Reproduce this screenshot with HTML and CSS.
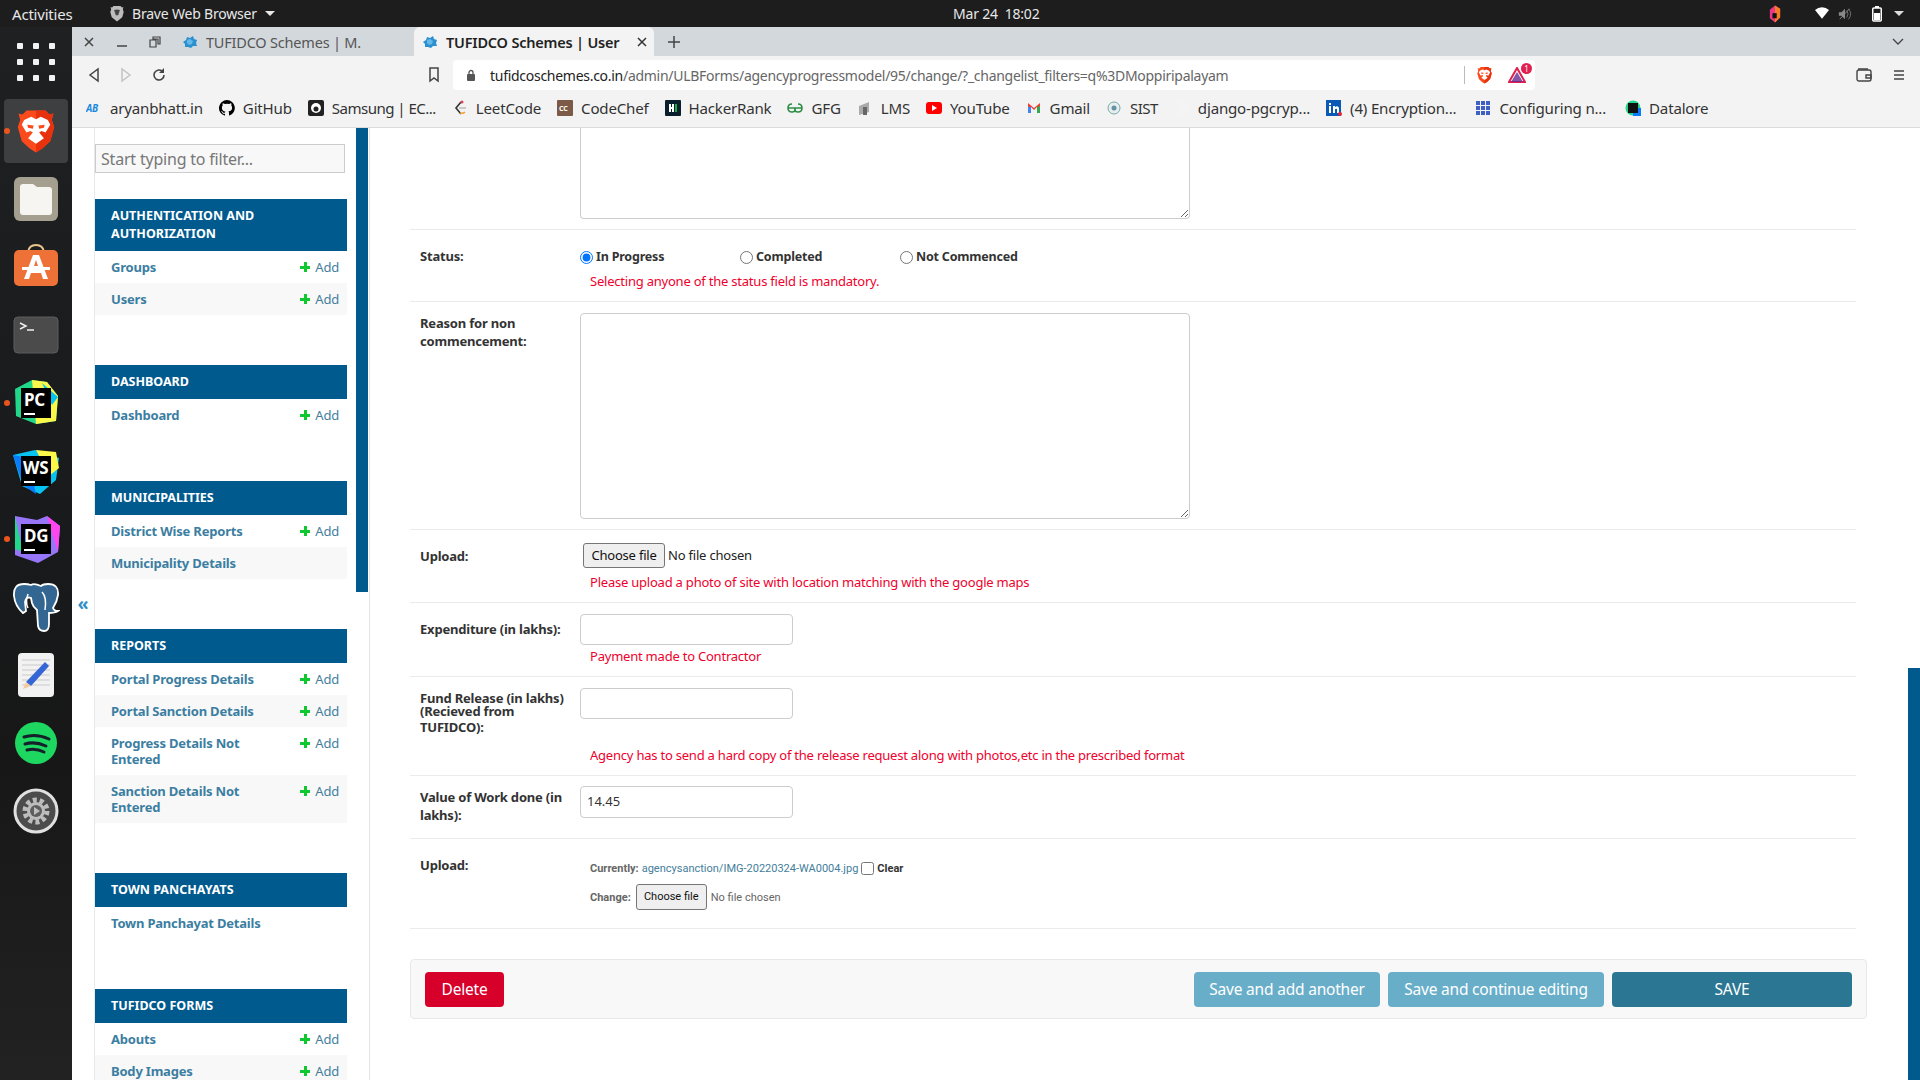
FILE: index.html
```html
<!DOCTYPE html>
<html lang="en">
<head>
  <meta charset="UTF-8">
  <title>TUFIDCO Schemes | User</title>
  <link rel="stylesheet" href="styles.css">
</head>
<body>
  <svg class="defs" width="0" height="0">
    <symbol id="fav" viewBox="0 0 16 16">
      <path d="M1 8l3-2 1-3 3 1 3-2 1 3 3 1-1 3 1 3-4 0-2 2-3-1-3 0 0-3z" fill="#2b8fd0"/>
      <path d="M5 6l3-1 3 2-1 3-3 1-2-2z" fill="#63b8e8"/>
    </symbol>
    <symbol id="lion" viewBox="0 0 48 56">
      <path d="M12 2h24l5 5 5-1-2 8 3 9-5 18-10 9-8 5-8-5-10-9-5-18 3-9-2-8 5 1z" fill="#fb4a1c"/>
      <path d="M24 2h12l5 5 5-1-2 8 3 9-5 18-10 9-8 5z" fill="#e8320e"/>
      <path d="M9 14l9-4 6 3 6-3 9 4 3 6-6 10-5-2-3 2 6 7-10 7-10-7 6-7-3-2-5 2-6-10z" fill="#fff"/>
      <path d="M13 20l8 1-1 4-6-1zM35 20l-8 1 1 4 6-1z" fill="#fb4a1c"/>
    </symbol>
    <symbol id="octo" viewBox="0 0 16 16">
      <path d="M8 0a8 8 0 0 0-2.500 15.600c.4.100.5-.2.5-.4v-1.400c-2.200.5-2.700-1-2.700-1-.4-.9-.9-1.200-.9-1.200-.7-.5.100-.5.100-.5.800.100 1.200.800 1.200.800.700 1.200 1.900.900 2.300.700.100-.5.300-.9.500-1.100-1.800-.2-3.600-.9-3.600-4 0-.9.300-1.600.800-2.100-.1-.2-.4-1 .1-2.100 0 0 .7-.2 2.200.800a7.600 7.600 0 0 1 4 0c1.500-1 2.200-.8 2.200-.8.400 1.100.2 1.900.1 2.100.5.600.8 1.300.8 2.100 0 3.100-1.900 3.700-3.700 3.900.3.300.6.800.6 1.500v2.200c0 .2.100.5.600.4A8 8 0 0 0 8 0z"/>
    </symbol>
  </svg>

  <div class="topbar">
    <span class="activities">Activities</span>
    <span class="app-menu">
      <svg class="app-shield" viewBox="0 0 48 56"><path d="M12 2h24l5 5 5-1-2 8 3 9-5 18-18 14-18-14-5-18 3-9-2-8 5 1z" fill="#bdbdbd"/><path d="M14 16l10-2 10 2-4 12-2 6h-8l-2-6z" fill="#444"/></svg>
      Brave Web Browser
      <i class="caret"></i>
    </span>
    <span class="clock">Mar 24&nbsp; 18:02</span>
    <span class="tray">
      <svg class="tray-app" viewBox="0 0 14 20"><path d="M7 0l6 4v10l-6 6-6-5V5z" fill="#e8388a"/><path d="M7 0l6 4v10l-6 6z" fill="#f57c20"/><path d="M4 9h5v6H4z" fill="#111"/></svg>
      <svg class="tray-wifi" viewBox="0 0 16 14"><path d="M0 3a12 12 0 0 1 16 0l-8 10z" fill="#fff"/></svg>
      <svg class="tray-vol" viewBox="0 0 16 14"><path d="M1 5h3l4-4v12l-4-4H1z" fill="#8a8a8a"/><path d="M10 3q3 4 0 8M12 1q5 6 0 12" stroke="#777" fill="none"/><path d="M2 13L13 1" stroke="#8a8a8a"/></svg>
      <svg class="tray-batt" viewBox="0 0 10 16"><path d="M3 0h4v2H3z" fill="#fff"/><rect x=".75" y="2" width="8.500" height="13" rx="1" fill="none" stroke="#fff" stroke-width="1.500"/><rect x="2" y="7" width="6" height="7" fill="#fff"/></svg>
      <i class="caret caret-tray"></i>
    </span>
  </div>

  <div class="desktop">
    <nav class="dock">
      <div class="dock-item dock-grid">
        <div class="dots"><i></i><i></i><i></i><i></i><i></i><i></i><i></i><i></i><i></i></div>
      </div>
      <div class="dock-item dock-active running">
        <svg width="38" height="48"><use href="#lion"/></svg>
      </div>
      <div class="dock-item">
        <svg width="46" height="46" viewBox="0 0 46 46"><rect x="1" y="1" width="44" height="44" rx="6" fill="#a59f8f"/><path d="M7 11q0-3 3-3h10l4 3h12q3 0 3 3v22q0 3-3 3H10q-3 0-3-3z" fill="#f7f5f2"/></svg>
      </div>
      <div class="dock-item">
        <svg width="46" height="50" viewBox="0 0 46 50"><path d="M15 10q1-7 8-7t8 7" fill="none" stroke="#edc58f" stroke-width="2"/><rect x="1" y="8" width="44" height="36" rx="5" fill="#ee7138"/><path d="M20 13h6l9 24h-5l-2-6H18l-2 6h-5zM21 24h4l-2-6z" fill="#fff"/><path d="M9 25h28v3H9z" fill="#fff"/></svg>
      </div>
      <div class="dock-item">
        <svg width="46" height="38" viewBox="0 0 46 38"><rect x="1" y="1" width="44" height="36" rx="4" fill="#4b4b4b" stroke="#5c5c5c"/><path d="M7 7l6 3-6 3" fill="none" stroke="#eee" stroke-width="1.500"/><path d="M14 14h7" stroke="#eee" stroke-width="1.500"/></svg>
      </div>
      <div class="dock-item running">
        <svg width="48" height="48" viewBox="0 0 48 48"><path d="M3 10L20 1l15 2 11 14-2 25-20 3-20-8z" fill="#21d789"/><path d="M20 1l15 2 11 14-2 25-20 3z" fill="#fcf84a"/><path d="M30 4l16 14-6 8z" fill="#07c3f2"/><rect x="9" y="9" width="30" height="30" fill="#000"/><text x="12" y="27" class="jb-text">PC</text><path d="M12 34h11v2H12z" fill="#fff"/></svg>
      </div>
      <div class="dock-item">
        <svg width="48" height="48" viewBox="0 0 48 48"><path d="M1 8l22-5 24 8-3 22-16 14-18-8z" fill="#07c3f2"/><path d="M24 3l20 2 3 16-10 8z" fill="#fcf84a"/><path d="M1 8l10 30 13 9-8-36z" fill="#087cfa"/><rect x="9" y="9" width="30" height="30" fill="#000"/><text x="11" y="27" class="jb-text">WS</text><path d="M12 34h11v2H12z" fill="#fff"/></svg>
      </div>
      <div class="dock-item running">
        <svg width="48" height="50" viewBox="0 0 48 50"><path d="M3 2l22 4 10-4 13 10-2 26-20 11-23-8z" fill="#9775f8"/><path d="M3 2l8 36-8-3z" fill="#21d789"/><path d="M35 2l13 10-2 26z" fill="#ff45ed"/><rect x="9" y="10" width="30" height="30" fill="#000"/><text x="12" y="28" class="jb-text">DG</text><path d="M12 35h11v2H12z" fill="#fff"/></svg>
      </div>
      <div class="dock-item">
        <svg width="48" height="50" viewBox="0 0 48 50"><path d="M12 2q-11 0-10 12 1 10 9 17l3-2-1-9q1-6 6-4l1 5q1 4 5 7l1 16q1 5 6 5t5-7V31q6 0 9-2-4 0-5-3 4-6 5-13Q47 2 36 2q-5 0-7 2-7-3-10-1-3-1-7-1z" fill="#336791" stroke="#fff" stroke-width="1.800"/><path d="M16 12q-3 8 0 14M30 10q5 5 3 18" fill="none" stroke="#fff" stroke-width="1.500"/></svg>
      </div>
      <div class="dock-item">
        <svg width="38" height="46" viewBox="0 0 38 46"><rect x="1" y="1" width="36" height="44" rx="4" fill="#f2f2f2"/><path d="M5 8h28M5 13h28M5 18h28M5 23h28M5 28h28M5 33h28" stroke="#c9c9c9"/><path d="M28 10l4 4-18 20-5-4z" fill="#3566d6"/><path d="M9 30l5 4-8 3z" fill="#f2c9a0"/></svg>
      </div>
      <div class="dock-item">
        <svg width="42" height="42" viewBox="0 0 42 42"><circle cx="21" cy="21" r="21" fill="#1ed760"/><path d="M9 15q12-4 25 2M10 22q10-3 21 2M12 28q9-2 17 2" fill="none" stroke="#14212a" stroke-width="3" stroke-linecap="round"/></svg>
      </div>
      <div class="dock-item">
        <svg width="46" height="46" viewBox="0 0 46 46"><circle cx="23" cy="23" r="21" fill="#4c4c4c" stroke="#e0e0e0" stroke-width="3"/><circle cx="23" cy="23" r="11" fill="none" stroke="#bdbdbd" stroke-width="5" stroke-dasharray="4 2.900"/><circle cx="23" cy="23" r="9" fill="#bdbdbd"/><circle cx="23" cy="23" r="6" fill="#5e5e5e"/><path d="M21 19l6 4-6 4z" fill="#bdbdbd"/></svg>
      </div>
    </nav>

    <div class="browser">
      <div class="tabstrip">
        <div class="win-btns">
          <svg width="12" height="12" viewBox="0 0 12 12"><path d="M2 2l8 8M10 2l-8 8" stroke="#444" stroke-width="1.500"/></svg>
          <svg width="12" height="12" viewBox="0 0 12 12"><path d="M1 10h10" stroke="#444" stroke-width="1.500"/></svg>
          <svg width="12" height="12" viewBox="0 0 12 12"><path d="M4 1h7v7H9V3H4zM1 4h6v7H1z" fill="none" stroke="#444" stroke-width="1.200"/></svg>
        </div>
        <div class="tab">
          <svg class="favicon"><use href="#fav"/></svg>
          <span class="tab-title">TUFIDCO Schemes | M.</span>
        </div>
        <div class="tab tab-active">
          <svg class="favicon"><use href="#fav"/></svg>
          <span class="tab-title">TUFIDCO Schemes | User</span>
          <svg class="tab-close" width="10" height="10" viewBox="0 0 10 10"><path d="M1 1l8 8M9 1L1 9" stroke="#333" stroke-width="1.500"/></svg>
        </div>
        <svg class="tab-new" width="14" height="14" viewBox="0 0 14 14"><path d="M7 1v12M1 7h12" stroke="#444" stroke-width="1.500"/></svg>
        <svg class="tab-list" width="12" height="8" viewBox="0 0 12 8"><path d="M1 1l5 5 5-5" fill="none" stroke="#444" stroke-width="1.300"/></svg>
      </div>

      <div class="toolbar">
        <svg class="nav-ico" width="14" height="16" viewBox="0 0 14 16"><path d="M11 2v12L3 8z" fill="none" stroke="#444" stroke-width="1.500"/></svg>
        <svg class="nav-ico" width="14" height="16" viewBox="0 0 14 16"><path d="M3 2v12l8-6z" fill="none" stroke="#c4c4c4" stroke-width="1.500"/></svg>
        <svg class="nav-ico" width="16" height="16" viewBox="0 0 16 16"><path d="M13 8a5 5 0 1 1-2-4" fill="none" stroke="#444" stroke-width="1.600"/><path d="M13 1v5H8z" fill="#444"/></svg>
        <svg class="bookmark-ico" width="12" height="16" viewBox="0 0 12 16"><path d="M2 1h8v13l-4-3-4 3z" fill="none" stroke="#444" stroke-width="1.500"/></svg>
        <div class="urlbar">
          <svg class="lock" width="10" height="12" viewBox="0 0 10 12"><rect x="1" y="5" width="8" height="7" rx="1" fill="#555"/><path d="M3 5V3.500a2 2 0 0 1 4 0V5" fill="none" stroke="#555" stroke-width="1.300"/></svg>
          <span class="url"><b>tufidcoschemes.co.in</b>/admin/ULBForms/agencyprogressmodel/95/change/?_changelist_filters=q%3DMoppiripalayam</span>
          <span class="url-sep"></span>
          <svg class="shield" width="15" height="18"><use href="#lion"/></svg>
          <span class="rewards">
            <svg width="18" height="16" viewBox="0 0 18 16"><path d="M9 1l8 14H1z" fill="#fff" stroke="#e0204f" stroke-width="2"/><path d="M3 15h12L9 5z" fill="#662d91" opacity=".8"/></svg>
            <i class="rewards-badge">1</i>
          </span>
        </div>
        <svg class="wallet" width="16" height="14" viewBox="0 0 16 14"><rect x="1" y="2" width="14" height="11" rx="2" fill="none" stroke="#444" stroke-width="1.400"/><path d="M2 1h10M10 7h5v3h-5z" fill="none" stroke="#444" stroke-width="1.400"/></svg>
        <svg class="menu-ico" width="12" height="12" viewBox="0 0 12 12"><path d="M1 2h10M1 6h10M1 10h10" stroke="#444" stroke-width="1.600"/></svg>
      </div>

      <div class="bookmarks">
        <a class="bm"><svg class="bm-ico" viewBox="0 0 16 16"><text x="0" y="12" class="ab-text">AB</text></svg>aryanbhatt.in</a>
        <a class="bm"><svg class="bm-ico"><use href="#octo"/></svg>GitHub</a>
        <a class="bm bm-tight"><svg class="bm-ico" viewBox="0 0 16 16"><rect width="16" height="16" rx="2" fill="#222"/><circle cx="8" cy="8" r="5" fill="#fff"/><circle cx="8" cy="9" r="2.500" fill="#222"/></svg>Samsung | EC...</a>
        <a class="bm"><svg class="bm-ico" viewBox="0 0 16 16"><path d="M9 2L4 8l5 6" fill="none" stroke="#333" stroke-width="1.600"/><path d="M7 8h7" stroke="#bbb" stroke-width="1.500"/><path d="M8 13q3 1 5-1" fill="none" stroke="#f0a030" stroke-width="1.500"/><circle cx="10" cy="2" r="1.500" fill="#e0405a"/></svg>LeetCode</a>
        <a class="bm"><svg class="bm-ico" viewBox="0 0 16 16"><rect width="16" height="16" rx="1" fill="#7d5a45"/><text x="2" y="11" class="cc-text">CC</text></svg>CodeChef</a>
        <a class="bm"><svg class="bm-ico" viewBox="0 0 16 16"><rect width="16" height="16" rx="1" fill="#0b1e2b"/><path d="M4 4h2v3h1V4h2v8H7V9H6v3H4z" fill="#fff"/><path d="M10 4h2v8h-2z" fill="#1ba94c"/></svg>HackerRank</a>
        <a class="bm"><svg class="bm-ico" viewBox="0 0 16 16"><path d="M1 8h14M5 4Q1 4 1 8t4 4 3-4M11 4q4 0 4 4t-4 4-3-4" fill="none" stroke="#2f8d46" stroke-width="1.600"/></svg>GFG</a>
        <a class="bm"><svg class="bm-ico" viewBox="0 0 16 16"><path d="M2 6l10-4v10l-10 3z" fill="#aaa"/><path d="M6 7h4v8H6z" fill="#666"/></svg>LMS</a>
        <a class="bm"><svg class="bm-ico" viewBox="0 0 16 16"><rect y="2" width="16" height="12" rx="3" fill="#f00"/><path d="M6 5l5 3-5 3z" fill="#fff"/></svg>YouTube</a>
        <a class="bm"><svg class="bm-ico" viewBox="0 0 16 16"><path d="M2 3v10h3V7l3 3 3-3v6h3V3l-6 5z" fill="#ea4335"/><path d="M2 7v6h3V7z" fill="#4285f4"/><path d="M11 7v6h3V6z" fill="#34a853"/></svg>Gmail</a>
        <a class="bm bm-tight"><svg class="bm-ico" viewBox="0 0 16 16"><circle cx="8" cy="8" r="6" fill="#e6eef0" stroke="#7aa" stroke-width="1"/><circle cx="8" cy="8" r="2.500" fill="#6a8fa0"/></svg>SIST</a>
        <a class="bm"><svg class="bm-ico" viewBox="0 0 16 16"><path d="M3 1h7l3 3v11H3z" fill="#f4f4f4"/></svg>django-pgcryp...</a>
        <a class="bm"><svg class="bm-ico" viewBox="0 0 16 16"><rect width="15" height="16" fill="#0a59b4"/><path d="M3 6h2v7H3zM3 3h2v2H3zM7 6h2v1q3-2 4 1v5h-2V9q-2-1-2 1v3H7z" fill="#fff"/><circle cx="14" cy="14" r="2" fill="#e0263c"/></svg>(4) Encryption...</a>
        <a class="bm bm-push"><svg class="bm-ico" viewBox="0 0 16 16"><path d="M1 1h4v4H1zM6 1h4v4H6zM11 1h4v4h-4zM1 6h4v4H1zM6 6h4v4H6zM11 6h4v4h-4zM1 11h4v4H1zM6 11h4v4H6zM11 11h4v4h-4z" fill="#3f5fc4"/></svg>Configuring n...</a>
        <a class="bm bm-push"><svg class="bm-ico" viewBox="0 0 16 16"><circle cx="8" cy="8" r="7.500" fill="#21d789"/><path d="M8 8h8v8H8z" fill="#087cfa"/><rect x="3" y="3" width="10" height="10" fill="#111"/></svg>Datalore</a>
      </div>

      <div class="page">
        <aside class="sidebar">
          <div class="side-nav">
            <input class="nav-filter" type="text" placeholder="Start typing to filter...">

            <div class="module">
              <h3>Authentication and Authorization</h3>
              <div class="mod-row"><a class="mod-name">Groups</a><a class="add"><span class="plus"></span>Add</a></div>
              <div class="mod-row"><a class="mod-name">Users</a><a class="add"><span class="plus"></span>Add</a></div>
            </div>
            <div class="module">
              <h3>Dashboard</h3>
              <div class="mod-row"><a class="mod-name">Dashboard</a><a class="add"><span class="plus"></span>Add</a></div>
            </div>
            <div class="module">
              <h3>Municipalities</h3>
              <div class="mod-row"><a class="mod-name">District Wise Reports</a><a class="add"><span class="plus"></span>Add</a></div>
              <div class="mod-row"><a class="mod-name">Municipality Details</a></div>
            </div>
            <div class="module">
              <h3>Reports</h3>
              <div class="mod-row"><a class="mod-name">Portal Progress Details</a><a class="add"><span class="plus"></span>Add</a></div>
              <div class="mod-row"><a class="mod-name">Portal Sanction Details</a><a class="add"><span class="plus"></span>Add</a></div>
              <div class="mod-row"><a class="mod-name">Progress Details Not Entered</a><a class="add"><span class="plus"></span>Add</a></div>
              <div class="mod-row"><a class="mod-name">Sanction Details Not Entered</a><a class="add"><span class="plus"></span>Add</a></div>
            </div>
            <div class="module">
              <h3>Town Panchayats</h3>
              <div class="mod-row"><a class="mod-name">Town Panchayat Details</a></div>
            </div>
            <div class="module">
              <h3>TUFIDCO Forms</h3>
              <div class="mod-row"><a class="mod-name">Abouts</a><a class="add"><span class="plus"></span>Add</a></div>
              <div class="mod-row"><a class="mod-name">Body Images</a><a class="add"><span class="plus"></span>Add</a></div>
            </div>
          </div>
          <div class="side-scroll"><div class="side-thumb"></div></div>
          <button class="nav-toggle">«</button>
        </aside>

        <main class="content">
          <div class="form-row row-top">
            <div class="form-label"></div>
            <div class="form-field"><textarea class="text-area area-cut"></textarea></div>
          </div>

          <div class="form-row">
            <label class="form-label">Status:</label>
            <div class="form-field">
              <div class="radio-list">
                <label class="radio-item"><input type="radio" name="status" checked>In Progress</label>
                <label class="radio-item"><input type="radio" name="status">Completed</label>
                <label class="radio-item"><input type="radio" name="status">Not Commenced</label>
              </div>
              <p class="help help-status">Selecting anyone of the status field is mandatory.</p>
            </div>
          </div>

          <div class="form-row row-reason">
            <label class="form-label label-tight">Reason for non commencement:</label>
            <div class="form-field"><textarea class="text-area area-full"></textarea></div>
          </div>

          <div class="form-row">
            <label class="form-label">Upload:</label>
            <div class="form-field">
              <div class="file-line"><span class="file-btn">Choose file</span><span class="file-none">No file chosen</span></div>
              <p class="help help-file">Please upload a photo of site with location matching with the google maps</p>
            </div>
          </div>

          <div class="form-row">
            <label class="form-label">Expenditure (in lakhs):</label>
            <div class="form-field">
              <input class="text-input" type="text">
              <p class="help">Payment made to Contractor</p>
            </div>
          </div>

          <div class="form-row">
            <label class="form-label label-fund"><span class="fund-top">Fund Release (in lakhs) (Recieved from</span>TUFIDCO):</label>
            <div class="form-field">
              <input class="text-input" type="text">
              <p class="help help-fund">Agency has to send a hard copy of the release request along with photos,etc in the prescribed format</p>
            </div>
          </div>

          <div class="form-row row-value">
            <label class="form-label label-value">Value of Work done (in lakhs):</label>
            <div class="form-field"><input class="text-input" type="text" value="14.45"></div>
          </div>

          <div class="form-row row-current">
            <label class="form-label">Upload:</label>
            <div class="form-field field-current">
              <div class="current-line">
                <span class="cur-label">Currently:</span>
                <a class="cur-link">agencysanction/IMG-20220324-WA0004.jpg</a>
                <input class="cur-check" type="checkbox">
                <span class="cur-clear">Clear</span>
              </div>
              <div class="change-line">
                <span class="cur-label">Change:</span>
                <span class="file-btn file-btn-small">Choose file</span>
                <span class="file-none-small">No file chosen</span>
              </div>
            </div>
          </div>

          <div class="submit-row">
            <button class="btn btn-delete">Delete</button>
            <div class="submit-right">
              <button class="btn btn-light btn-another">Save and add another</button>
              <button class="btn btn-light btn-continue">Save and continue editing</button>
              <button class="btn btn-save">SAVE</button>
            </div>
          </div>

          <div class="page-thumb"></div>
        </main>
      </div>
    </div>
  </div>
</body>
</html>
```

FILE: styles.css
```css
* {
  box-sizing: border-box;
}

html, body {
  margin: 0;
  padding: 0;
  height: 1080px;
  overflow: hidden;
}

body {
  font-family: "Noto Sans", "Open Sans", sans-serif;
  color: #333;
  background: #fff;
  letter-spacing: -0.2px;
}

.defs {
  position: absolute;
}

/* ---- gnome top bar ---- */
.topbar {
  height: 27px;
  background: #1d1d1d;
  color: #e8e8e8;
  display: flex;
  align-items: center;
  font-size: 14px;
  padding-left: 12px;
  position: relative;
}

.activities {
  width: 98px;
  font-size: 15px;
}

.app-menu {
  display: flex;
  align-items: center;
  gap: 8px;
}

.app-shield {
  width: 14px;
  height: 17px;
}

.caret {
  width: 0;
  height: 0;
  border-left: 5px solid transparent;
  border-right: 5px solid transparent;
  border-top: 5px solid #e8e8e8;
}

.clock {
  position: absolute;
  left: 953px;
  top: 4px;
}

.tray {
  margin-left: auto;
  display: flex;
  align-items: center;
  height: 27px;
  padding-right: 16px;
}

.tray-app { width: 12px; height: 18px; margin-right: 34px; }
.tray-wifi { width: 14px; height: 13px; margin-right: 9px; }
.tray-vol { width: 14px; height: 14px; margin-right: 20px; }
.tray-batt { width: 10px; height: 16px; margin-right: 12px; }
.caret-tray { border-top-color: #ddd; }

/* ---- dock ---- */
.desktop {
  display: flex;
  height: 1053px;
}

.dock {
  width: 72px;
  flex: none;
  background: linear-gradient(180deg, #1f2021 0%, #191b1d 40%, #171717 70%, #222 100%);
}

.dock-item {
  height: 68px;
  display: flex;
  align-items: center;
  justify-content: center;
  position: relative;
}

.dock-grid {
  height: 70px;
}

.dots {
  display: grid;
  grid-template-columns: repeat(3, 6px);
  gap: 10px;
}

.dots i {
  width: 6px;
  height: 6px;
  border-radius: 1px;
  background: #f2f2f2;
}

.dock-active::before {
  content: "";
  position: absolute;
  left: 4px;
  top: 2px;
  width: 64px;
  height: 64px;
  border-radius: 4px;
  background: #3d3f41;
}

.dock-active svg {
  position: relative;
}

.running::after {
  content: "";
  position: absolute;
  left: 4px;
  top: 31px;
  width: 6px;
  height: 6px;
  border-radius: 50%;
  background: #e9541f;
}

.jb-text {
  font: bold 17px "Noto Sans", sans-serif;
  fill: #fff;
}

/* ---- browser chrome ---- */
.browser {
  flex: 1;
  min-width: 0;
  display: flex;
  flex-direction: column;
}

.tabstrip {
  height: 29px;
  background: #d3d8dc;
  display: flex;
  align-items: center;
  font-size: 14.500px;
  position: relative;
}

.win-btns {
  display: flex;
  gap: 21px;
  margin-left: 11px;
  width: 96px;
}

.tab {
  display: flex;
  align-items: center;
  gap: 8px;
  width: 235px;
  height: 29px;
  padding-left: 3px;
  color: #555;
}

.tab-active {
  width: 240px;
  background: #f3f3f3;
  border-radius: 6px 6px 0 0;
  color: #222;
  font-weight: 600;
  padding-left: 8px;
  position: relative;
}

.favicon {
  width: 16px;
  height: 16px;
  flex: none;
}

.tab-title {
  white-space: nowrap;
}

.tab-close {
  position: absolute;
  right: 7px;
  top: 10px;
}

.tab-new {
  margin-left: 13px;
}

.tab-list {
  margin-left: auto;
  margin-right: 16px;
}

.toolbar {
  height: 38px;
  background: #f3f3f3;
  display: flex;
  align-items: center;
  padding-left: 15px;
}

.nav-ico {
  margin-right: 18px;
}

.bookmark-ico {
  margin-left: 243px;
  margin-right: 13px;
}

.urlbar {
  width: 1082px;
  height: 30px;
  background: #fff;
  border-radius: 4px;
  display: flex;
  align-items: center;
  padding-left: 13px;
  font-size: 14px;
  letter-spacing: -0.28px;
  color: #666;
}

.url b {
  font-weight: 400;
  color: #222;
}

.lock {
  margin-right: 14px;
}

.url {
  white-space: nowrap;
  width: 974px;
  overflow: hidden;
}

.url-sep {
  width: 1px;
  height: 18px;
  background: #bbb;
  margin-right: 12px;
}

.rewards {
  position: relative;
  margin-left: 16px;
  display: flex;
}

.rewards-badge {
  position: absolute;
  right: -6px;
  top: -4px;
  width: 11px;
  height: 11px;
  border-radius: 50%;
  background: #e0204f;
  color: #fff;
  font: 8px/11px "Noto Sans", sans-serif;
  text-align: center;
}

.wallet {
  margin-left: 321px;
}

.menu-ico {
  margin-left: 21px;
}

.bookmarks {
  height: 34px;
  background: #f3f3f3;
  border-bottom: 1px solid #dcdcdc;
  display: flex;
  align-items: center;
  gap: 16px;
  padding: 0 0 5px 14px;
  font-size: 15.100px;
  color: #333;
}

.bm {
  display: flex;
  align-items: center;
  gap: 8px;
  white-space: nowrap;
}

.bm-tight {
  letter-spacing: -0.55px;
}

.bm-push {
  margin-left: 3px;
}

.bm-ico {
  width: 16px;
  height: 16px;
  flex: none;
}

.ab-text {
  font: italic bold 10px "Noto Sans", sans-serif;
  fill: #1a8ae0;
}

.cc-text {
  font: bold 7px "Noto Sans", sans-serif;
  fill: #fff;
}

/* ---- sidebar ---- */
.page {
  flex: 1;
  min-height: 0;
  display: flex;
  background: #fff;
}

.sidebar {
  width: 298px;
  flex: none;
  display: flex;
  border-right: 1px solid #e4e4e4;
  overflow: hidden;
  position: relative;
}

.side-nav {
  margin-left: 22px;
  border-left: 1px solid #e8e8e8;
  flex: none;
  width: 253px;
}

.nav-filter {
  display: block;
  width: 250px;
  height: 29px;
  margin: 16px 0 26px;
  padding: 0 5px;
  background: #f8f8f8;
  border: 1px solid #ccc;
  font: 16px "Noto Sans", sans-serif;
  letter-spacing: -0.2px;
}

.nav-filter::placeholder {
  color: #777;
  opacity: 1;
}

.module {
  margin-bottom: 50px;
}

.module h3 {
  margin: 0;
  padding: 8px 16px;
  background: #005a8e;
  color: #fff;
  font-size: 12.500px;
  font-weight: 700;
  line-height: 18px;
  text-transform: uppercase;
  letter-spacing: 0;
}

.mod-row {
  display: flex;
  justify-content: space-between;
  padding: 8px 8px;
  padding-left: 16px;
  line-height: 16px;
  font-size: 13px;
}

.mod-row:nth-child(odd) {
  background: #f8f8f8;
}

.mod-name {
  color: #3b7ea1;
  font-weight: 700;
  max-width: 150px;
}

.add {
  color: #447e9b;
  display: flex;
  align-items: center;
  flex: none;
  height: 16px;
  font-size: 13px;
}

.plus {
  width: 10px;
  height: 10px;
  margin-right: 5px;
  background:
    linear-gradient(#0fc830, #0fc830) center / 10px 3px no-repeat,
    linear-gradient(#0fc830, #0fc830) center / 3px 10px no-repeat;
}

.side-scroll {
  width: 12px;
  flex: none;
  margin-left: 9px;
}

.side-thumb {
  height: 464px;
  background: #005a8e;
}

.nav-toggle {
  position: absolute;
  left: 3px;
  top: 462px;
  width: 16px;
  height: 26px;
  padding: 0;
  border: 0;
  background: none;
  color: #2f8fc8;
  font: bold 18px/24px "Noto Sans", sans-serif;
}

/* ---- form ---- */
.content {
  flex: 1;
  min-width: 0;
  padding: 0 53px 0 40px;
  position: relative;
  overflow: hidden;
  font-size: 13px;
}

.form-row {
  display: flex;
  width: 1446px;
  padding: 11px 10px 9px;
  border-bottom: 1px solid #ebebeb;
}

.row-top {
  padding-top: 0;
  padding-bottom: 10px;
}

.row-reason {
  padding-bottom: 10px;
}

.form-label {
  width: 160px;
  flex: none;
  padding-top: 6px;
  font-weight: 700;
  line-height: 18px;
  color: #333;
  font-size: 13px;
}

.label-tight {
  padding-top: 1px;
}

.label-fund {
  padding-top: 4px;
}

.fund-top {
  display: block;
  line-height: 13px;
}

.label-value {
  padding-top: 2px;
  padding-right: 8px;
}

.form-field {
  flex: 1;
}

.text-area {
  display: block;
  width: 610px;
  border: 1px solid #ccc;
  border-radius: 4px;
  background: #fff;
}

.area-cut {
  height: 91px;
  border-top: 0;
  border-radius: 0 0 4px 4px;
}

.area-full {
  height: 206px;
}

.radio-list {
  display: flex;
  padding-top: 7px;
  height: 25px;
  line-height: 18px;
}

.radio-item {
  width: 160px;
  display: flex;
  align-items: center;
  height: 18px;
  font-weight: 700;
  font-size: 12.500px;
}

.radio-item input {
  width: 13px;
  height: 13px;
  margin: 0 3px 0 0;
}

.help {
  margin: 2px 0 0;
  padding-left: 10px;
  line-height: 18px;
  height: 20px;
  color: #f0002d;
  font-size: 13px;
  letter-spacing: -0.22px;
  white-space: nowrap;
}

.help-status {
  margin-top: 6px;
}

.help-file {
  margin-top: 5px;
}

.help-fund {
  margin-top: 27px;
}

.text-input {
  display: block;
  width: 213px;
  height: 31px;
  padding: 0 6px 2px;
  border: 1px solid #ccc;
  border-radius: 4px;
  background: #fff;
  color: #333;
  font: 13px "Noto Sans", sans-serif;
}

.row-value {
  padding-top: 10px;
  padding-bottom: 14px;
}

.row-value .text-input {
  height: 32px;
}

.file-line {
  display: flex;
  align-items: center;
  padding: 2px 0 0 3px;
}

.file-btn {
  display: inline-block;
  width: 82px;
  height: 25px;
  line-height: 23px;
  text-align: center;
  border: 1px solid #767676;
  border-radius: 3px;
  background: #efefef;
  color: #111;
  font-size: 13px;
  white-space: nowrap;
}

.file-none {
  margin-left: 3px;
  padding-bottom: 2px;
  font-size: 13px;
  color: #222;
}

.row-current {
  padding-bottom: 18px;
}

.field-current {
  padding: 9px 0 0 10px;
  font-family: Roboto, "Liberation Sans", sans-serif;
  font-size: 11px;
  letter-spacing: 0;
}

.current-line {
  display: flex;
  align-items: center;
  height: 18px;
}

.cur-label {
  font-weight: 700;
  color: #666;
}

.cur-link {
  color: #447e9b;
  margin-left: 3px;
}

.cur-check {
  width: 13px;
  height: 13px;
  margin: 1px 3px 0 3px;
}

.cur-clear {
  font-weight: 700;
  color: #333;
}

.change-line {
  display: flex;
  align-items: center;
  margin-top: 7px;
  height: 26px;
}

.file-btn-small {
  width: 71px;
  height: 26px;
  line-height: 24px;
  margin-left: 5px;
  font-size: 11px;
}

.file-none-small {
  margin-left: 4px;
  color: #666;
}

.submit-row {
  width: 1457px;
  height: 60px;
  margin-top: 30px;
  padding: 12px 14px;
  display: flex;
  justify-content: space-between;
  background: #f8f8f8;
  border: 1px solid #e8e8e8;
  border-radius: 4px;
}

.submit-right {
  display: flex;
  gap: 8px;
}

.btn {
  height: 35px;
  border: 0;
  border-radius: 4px;
  color: #fff;
  font: 15.500px "Noto Sans", sans-serif;
  letter-spacing: -0.2px;
  white-space: nowrap;
  padding: 0 0 2px;
}

.btn-delete {
  width: 79px;
  background: #d6002b;
}

.btn-light {
  background: #68aec9;
}

.btn-another {
  width: 186px;
}

.btn-continue {
  width: 216px;
}

.btn-save {
  width: 240px;
  background: #2a7693;
}

/* page scrollbar thumb sits over the right edge */
.page-thumb {
  position: absolute;
  right: 0;
  top: 540px;
  width: 12px;
  height: 412px;
  background: #005a8e;
}
```
